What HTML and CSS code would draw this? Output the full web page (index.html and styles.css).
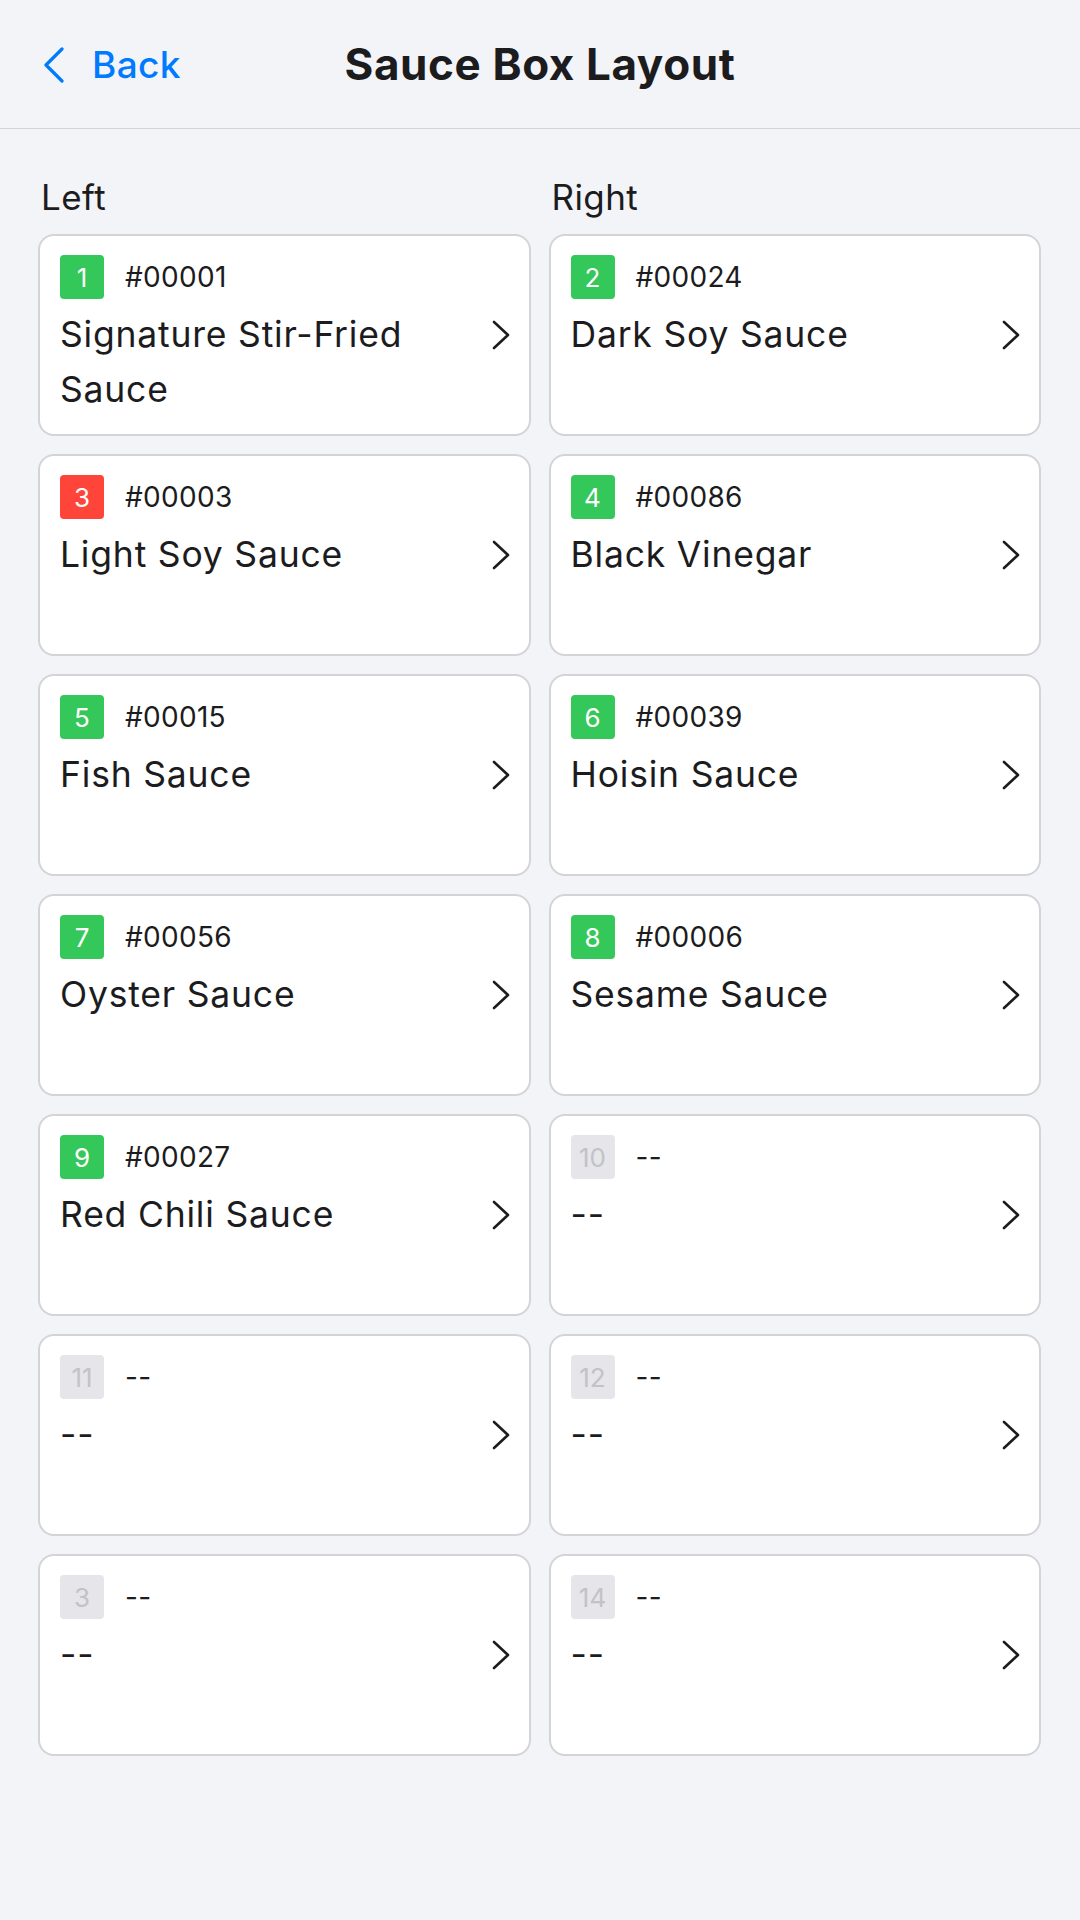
FILE: index.html
```html
<!DOCTYPE html>
<html lang="en">
<head>
<meta charset="utf-8">
<title>Sauce Box Layout</title>
<link rel="stylesheet" href="styles.css">
</head>
<body>
<header class="topbar">
  <div class="back">
    <svg class="back-icon" width="22" height="36" viewBox="0 0 22 36"><path d="M19 2 L3 18 L19 34" fill="none" stroke="#007aff" stroke-width="3.2" stroke-linecap="round" stroke-linejoin="round"/></svg>
    <span class="back-text">Back</span>
  </div>
  <h1 class="title">Sauce Box Layout</h1>
</header>
<main class="layout">
  <section class="column">
    <div class="col-label">Left</div>
    <div class="card"><div class="top"><span class="badge ok">1</span><span class="code">#00001</span></div><div class="row"><span class="name">Signature Stir-Fried Sauce</span><svg class="chev" width="20" height="30" viewBox="0 0 20 30"><path d="M3 2 L17 15 L3 28" fill="none" stroke="#1c1c1e" stroke-width="2.6" stroke-linecap="round" stroke-linejoin="round"/></svg></div></div>
    <div class="card"><div class="top"><span class="badge bad">3</span><span class="code">#00003</span></div><div class="row"><span class="name">Light Soy Sauce</span><svg class="chev" width="20" height="30" viewBox="0 0 20 30"><path d="M3 2 L17 15 L3 28" fill="none" stroke="#1c1c1e" stroke-width="2.6" stroke-linecap="round" stroke-linejoin="round"/></svg></div></div>
    <div class="card"><div class="top"><span class="badge ok">5</span><span class="code">#00015</span></div><div class="row"><span class="name">Fish Sauce</span><svg class="chev" width="20" height="30" viewBox="0 0 20 30"><path d="M3 2 L17 15 L3 28" fill="none" stroke="#1c1c1e" stroke-width="2.6" stroke-linecap="round" stroke-linejoin="round"/></svg></div></div>
    <div class="card"><div class="top"><span class="badge ok">7</span><span class="code">#00056</span></div><div class="row"><span class="name">Oyster Sauce</span><svg class="chev" width="20" height="30" viewBox="0 0 20 30"><path d="M3 2 L17 15 L3 28" fill="none" stroke="#1c1c1e" stroke-width="2.6" stroke-linecap="round" stroke-linejoin="round"/></svg></div></div>
    <div class="card"><div class="top"><span class="badge ok">9</span><span class="code">#00027</span></div><div class="row"><span class="name">Red Chili Sauce</span><svg class="chev" width="20" height="30" viewBox="0 0 20 30"><path d="M3 2 L17 15 L3 28" fill="none" stroke="#1c1c1e" stroke-width="2.6" stroke-linecap="round" stroke-linejoin="round"/></svg></div></div>
    <div class="card"><div class="top"><span class="badge empty">11</span><span class="code">--</span></div><div class="row"><span class="name">--</span><svg class="chev" width="20" height="30" viewBox="0 0 20 30"><path d="M3 2 L17 15 L3 28" fill="none" stroke="#1c1c1e" stroke-width="2.6" stroke-linecap="round" stroke-linejoin="round"/></svg></div></div>
    <div class="card"><div class="top"><span class="badge empty">3</span><span class="code">--</span></div><div class="row"><span class="name">--</span><svg class="chev" width="20" height="30" viewBox="0 0 20 30"><path d="M3 2 L17 15 L3 28" fill="none" stroke="#1c1c1e" stroke-width="2.6" stroke-linecap="round" stroke-linejoin="round"/></svg></div></div>
  </section>
  <section class="column">
    <div class="col-label">Right</div>
    <div class="card"><div class="top"><span class="badge ok">2</span><span class="code">#00024</span></div><div class="row"><span class="name">Dark Soy Sauce</span><svg class="chev" width="20" height="30" viewBox="0 0 20 30"><path d="M3 2 L17 15 L3 28" fill="none" stroke="#1c1c1e" stroke-width="2.6" stroke-linecap="round" stroke-linejoin="round"/></svg></div></div>
    <div class="card"><div class="top"><span class="badge ok">4</span><span class="code">#00086</span></div><div class="row"><span class="name">Black Vinegar</span><svg class="chev" width="20" height="30" viewBox="0 0 20 30"><path d="M3 2 L17 15 L3 28" fill="none" stroke="#1c1c1e" stroke-width="2.6" stroke-linecap="round" stroke-linejoin="round"/></svg></div></div>
    <div class="card"><div class="top"><span class="badge ok">6</span><span class="code">#00039</span></div><div class="row"><span class="name">Hoisin Sauce</span><svg class="chev" width="20" height="30" viewBox="0 0 20 30"><path d="M3 2 L17 15 L3 28" fill="none" stroke="#1c1c1e" stroke-width="2.6" stroke-linecap="round" stroke-linejoin="round"/></svg></div></div>
    <div class="card"><div class="top"><span class="badge ok">8</span><span class="code">#00006</span></div><div class="row"><span class="name">Sesame Sauce</span><svg class="chev" width="20" height="30" viewBox="0 0 20 30"><path d="M3 2 L17 15 L3 28" fill="none" stroke="#1c1c1e" stroke-width="2.6" stroke-linecap="round" stroke-linejoin="round"/></svg></div></div>
    <div class="card"><div class="top"><span class="badge empty">10</span><span class="code">--</span></div><div class="row"><span class="name">--</span><svg class="chev" width="20" height="30" viewBox="0 0 20 30"><path d="M3 2 L17 15 L3 28" fill="none" stroke="#1c1c1e" stroke-width="2.6" stroke-linecap="round" stroke-linejoin="round"/></svg></div></div>
    <div class="card"><div class="top"><span class="badge empty">12</span><span class="code">--</span></div><div class="row"><span class="name">--</span><svg class="chev" width="20" height="30" viewBox="0 0 20 30"><path d="M3 2 L17 15 L3 28" fill="none" stroke="#1c1c1e" stroke-width="2.6" stroke-linecap="round" stroke-linejoin="round"/></svg></div></div>
    <div class="card"><div class="top"><span class="badge empty">14</span><span class="code">--</span></div><div class="row"><span class="name">--</span><svg class="chev" width="20" height="30" viewBox="0 0 20 30"><path d="M3 2 L17 15 L3 28" fill="none" stroke="#1c1c1e" stroke-width="2.6" stroke-linecap="round" stroke-linejoin="round"/></svg></div></div>
  </section>
</main>
</body>
</html>
```

FILE: styles.css
```css
* { box-sizing: border-box; }
html, body { margin: 0; padding: 0; }
body {
  background: #f3f4f8;
  font-family: Inter, "Open Sans", "Liberation Sans", sans-serif;
  color: #1c1c1e;
  width: 1080px;
  min-height: 1920px;
}
.topbar {
  height: 129px;
  border-bottom: 1.5px solid #d4d4d8;
  display: flex;
  align-items: center;
  justify-content: center;
  position: relative;
}
.back {
  position: absolute;
  left: 43px;
  top: 45px;
  display: flex;
  align-items: center;
  gap: 27px;
}
.back-icon { display: block; }
.back-text {
  color: #007aff;
  font-size: 37px;
  font-weight: 500;
  letter-spacing: 0.4px;
  line-height: 40px;
}
.title {
  margin: 0;
  font-size: 44px;
  font-weight: 700;
  letter-spacing: 0.6px;
}
.layout {
  display: grid;
  grid-template-columns: 1fr 1fr;
  column-gap: 18px;
  padding: 0 39px 0 38px;
}
.column {
  display: flex;
  flex-direction: column;
  gap: 18px;
}
.col-label {
  font-size: 35px;
  letter-spacing: 0.4px;
  padding-left: 3px;
  height: 105px;
  margin-bottom: -18px;
  padding-top: 50px;
  line-height: 36px;
}
.card {
  background: #fff;
  border: 2px solid #d4d4d8;
  border-radius: 16px;
  height: 202px;
  padding: 19px 18px 0 20px;
}
.top {
  display: flex;
  align-items: center;
  gap: 21px;
  height: 44px;
}
.badge {
  width: 44px;
  height: 44px;
  border-radius: 4px;
  display: flex;
  align-items: center;
  justify-content: center;
  font-size: 26px;
  color: #fff;
}
.badge.ok { background: #34c759; }
.badge.bad { background: #ff453a; }
.badge.empty { background: #e5e5ea; color: #c2c2c7; }
.code {
  font-size: 28px;
  letter-spacing: 0.3px;
}
.row {
  display: flex;
  justify-content: space-between;
  align-items: flex-start;
  margin-top: 8px;
  gap: 20px;
}
.name {
  font-size: 35.5px;
  line-height: 55px;
  letter-spacing: 0.8px;
}
.chev {
  display: block;
  flex: none;
  margin-top: 13px;
}
```
